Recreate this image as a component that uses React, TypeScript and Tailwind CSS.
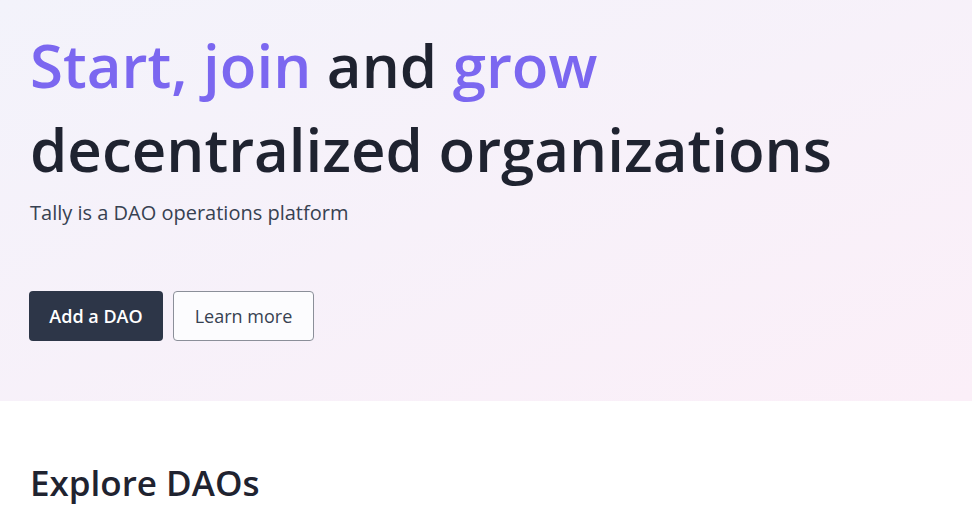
import React from "react";

export default function App() {
  return (
    <div className="min-h-[511px] bg-white" style={{ fontFamily: '"Open Sans", "Noto Sans", sans-serif' }}>
      <section className="h-[401px] bg-gradient-to-br from-[#f3f3fb] to-[#fbeff8] px-[30px] pt-[23px]">
        <h1 className="text-[60px] font-semibold leading-[84px] text-[#1f2330]">
          <span className="text-[#7b67f0]">Start, join</span> and <span className="text-[#7b67f0]">grow</span>
          <br />
          decentralized organizations
        </h1>
        <p className="mt-[8px] text-[20px] leading-[28px] text-[#374151]">Tally is a DAO operations platform</p>
        <div className="-ml-px mt-[64px] flex gap-[10px]">
          <button className="h-[50px] w-[134px] rounded-[4px] bg-[#2d3648] text-[18px] font-semibold text-white">Add a DAO</button>
          <button className="h-[50px] w-[141px] rounded-[4px] border border-[#8b8f99] bg-[#fcfcfe] text-[18px] font-medium text-[#374151]">Learn more</button>
        </div>
      </section>
      <section className="px-[30px] pt-[60px]">
        <h2 className="text-[35px] font-semibold leading-[44px] text-[#1f2330]">Explore DAOs</h2>
      </section>
    </div>
  );
}
